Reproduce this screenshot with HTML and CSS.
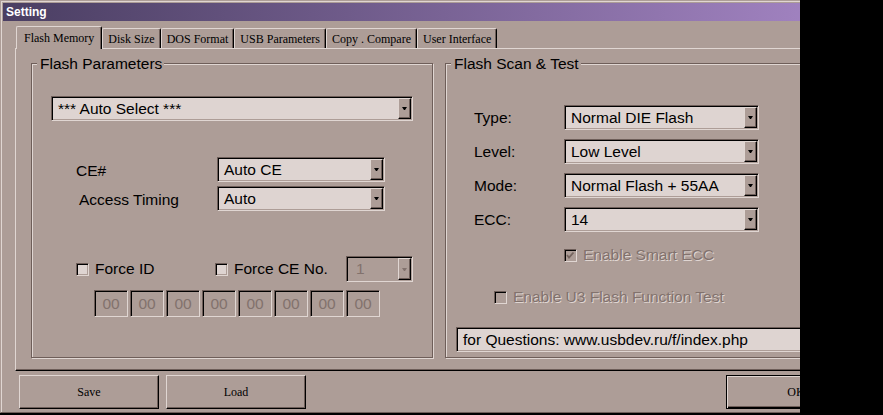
FILE: index.html
```html
<!DOCTYPE html>
<html lang="en">
<head>
  <meta charset="UTF-8">
  <meta name="viewport" content="width=device-width, initial-scale=1.0">
  <title>Setting</title>
  <link rel="stylesheet" href="styles.css">
</head>
<body>
  <div class="screen">
    <div class="window">
      <div class="titlebar">Setting</div>

      <!-- Tabs -->
      <div class="tabs">
        <div class="tab active">Flash Memory</div>
        <div class="tab">Disk Size</div>
        <div class="tab">DOS Format</div>
        <div class="tab">USB Parameters</div>
        <div class="tab">Copy . Compare</div>
        <div class="tab">User Interface</div>
      </div>

      <div class="panel">
        <!-- Flash Parameters -->
        <fieldset class="group params">
          <legend>Flash Parameters</legend>
          <div class="combo flash-select">
            <span class="value">*** Auto Select ***</span>
            <span class="drop"></span>
          </div>
          <div class="row ce-row">
            <span class="label">CE#</span>
            <div class="combo short">
              <span class="value">Auto CE</span>
              <span class="drop"></span>
            </div>
          </div>
          <div class="row timing-row">
            <span class="label">Access Timing</span>
            <div class="combo short">
              <span class="value">Auto</span>
              <span class="drop"></span>
            </div>
          </div>
          <div class="force-row">
            <label class="check force-id"><span class="box"></span>Force ID</label>
            <label class="check force-ce"><span class="box"></span>Force CE No.</label>
            <div class="combo tiny disabled">
              <span class="value">1</span>
              <span class="drop"></span>
            </div>
          </div>
          <div class="id-bytes">
            <span class="hex">00</span>
            <span class="hex">00</span>
            <span class="hex">00</span>
            <span class="hex">00</span>
            <span class="hex">00</span>
            <span class="hex">00</span>
            <span class="hex">00</span>
            <span class="hex">00</span>
          </div>
        </fieldset>

        <!-- Flash Scan & Test -->
        <fieldset class="group scan">
          <legend>Flash Scan &amp; Test</legend>
          <div class="scan-row">
            <span class="label">Type:</span>
            <div class="combo">
              <span class="value">Normal DIE Flash</span>
              <span class="drop"></span>
            </div>
          </div>
          <div class="scan-row">
            <span class="label">Level:</span>
            <div class="combo">
              <span class="value">Low Level</span>
              <span class="drop"></span>
            </div>
          </div>
          <div class="scan-row">
            <span class="label">Mode:</span>
            <div class="combo">
              <span class="value">Normal Flash + 55AA</span>
              <span class="drop"></span>
            </div>
          </div>
          <div class="scan-row">
            <span class="label">ECC:</span>
            <div class="combo">
              <span class="value">14</span>
              <span class="drop"></span>
            </div>
          </div>
          <label class="check disabled smart-ecc">
            <span class="box">
              <svg width="11" height="11" viewBox="0 0 11 11"><polyline points="2,5 4,7.5 8.5,2.5" fill="none" stroke="#75655f" stroke-width="1.8"/></svg>
            </span>Enable Smart ECC
          </label>
          <label class="check disabled u3"><span class="box"></span>Enable U3 Flash Function Test</label>
          <div class="edit questions">for Questions: www.usbdev.ru/f/index.php</div>
        </fieldset>
      </div>

      <!-- Dialog buttons -->
      <div class="buttons">
        <div class="button">Save</div>
        <div class="button">Load</div>
        <div class="button ok">OK</div>
      </div>
    </div>
  </div>
</body>
</html>
```

FILE: styles.css
```css
body {
  margin: 0;
  background-color: #000000;
  font-family: "Liberation Sans", Arial, sans-serif;
  font-size: 15.5px;
  color: #000000;
}

.screen {
  width: 800px;
  height: 415px;
  overflow: hidden;
}

/* Window frame */
.window {
  width: 885px;
  box-sizing: border-box;
  padding: 2px 2px 3px 2px;
  border: 1px solid #ad9d97;
  border-bottom-color: #6e5e59;
  background-color: #ad9d97;
  box-shadow: inset 1px 1px 0 #e0d6d2;
}
.titlebar {
  height: 18px;
  line-height: 18px;
  padding-left: 3px;
  background: linear-gradient(to right, #4a3e62, #a888c8);
  color: #ffffff;
  font-size: 12px;
  font-weight: bold;
}

/* Tabs */
.tabs {
  display: flex;
  align-items: flex-end;
  height: 22px;
  margin: 5px 0 0 13px;
  font-family: "Liberation Serif", "Times New Roman", serif;
  font-size: 12px;
}
.tab {
  height: 20px;
  box-sizing: border-box;
  padding: 3px 5px 0;
  line-height: 14px;
  border: 1px solid #e0d6d2;
  border-right-color: #000000;
  border-bottom: none;
  border-radius: 2px 2px 0 0;
  box-shadow: inset -1px 0 0 #6e5e59;
  white-space: nowrap;
}
.tab.active {
  position: relative;
  z-index: 1;
  height: 23px;
  margin-bottom: -1px;
  padding: 4px 7px 0;
  background-color: #ad9d97;
}

.panel {
  display: flex;
  height: 323px;
  box-sizing: border-box;
  margin-left: 12px;
  padding: 6px 0 12px 15px;
  border-top: 1px solid #e0d6d2;
  border-left: 1px solid #e0d6d2;
  border-bottom: 1px solid #000000;
  box-shadow: inset 0 -1px 0 #6e5e59;
}

/* Group boxes */
.group {
  margin: 0;
  padding: 0;
  min-width: 0;
  border: 1px solid #6e5e59;
  box-shadow: inset 1px 1px 0 #e0d6d2, 1px 1px 0 #e0d6d2;
}
.group legend {
  margin-left: 5px;
  padding: 0 2px 0 3px;
  line-height: 17px;
  background-color: #ad9d97;
}
.params {
  width: 402px;
  box-sizing: border-box;
}
.scan {
  width: 390px;
  box-sizing: border-box;
  margin-left: 12px;
}

/* Combo boxes */
.combo {
  display: flex;
  height: 25px;
  box-sizing: border-box;
  padding: 1px;
  border: 1px solid;
  border-color: #6e5e59 #e0d6d2 #e0d6d2 #6e5e59;
  box-shadow: inset 1px 1px 0 #000000, inset -1px -1px 0 #ad9d97;
  background-color: #ded4d1;
}
.combo .value {
  flex: 1;
  padding-left: 5px;
  line-height: 21px;
  white-space: nowrap;
  overflow: hidden;
}
.drop {
  display: flex;
  align-items: center;
  justify-content: center;
  width: 13px;
  box-sizing: border-box;
  border: 1px solid;
  border-color: #e0d6d2 #000000 #000000 #e0d6d2;
  box-shadow: inset -1px -1px 0 #6e5e59;
  background-color: #ad9d97;
}
.drop::after {
  content: '';
  width: 1px;
  border-left: 2px solid transparent;
  border-right: 2px solid transparent;
  border-top: 3px solid #000000;
}
.combo.disabled {
  background-color: #ad9d97;
}
.combo.disabled .value {
  color: #82726d;
  padding-left: 8px;
}
.combo.disabled .drop::after {
  border-top-color: #82726d;
}

/* Flash Parameters content */
.flash-select {
  width: 362px;
  margin: 24px 0 0 19px;
}
.row {
  display: flex;
  margin-top: 4px;
}
.row .label {
  width: 185px;
  box-sizing: border-box;
  height: 25px;
  line-height: 28px;
}
.ce-row {
  margin-top: 36px;
}
.ce-row .label {
  padding-left: 44px;
}
.timing-row .label {
  padding-left: 47px;
}
.combo.short {
  width: 168px;
}
.force-row {
  display: flex;
  align-items: center;
  height: 26px;
  margin: 45px 0 0 44px;
}
.force-id {
  width: 139px;
}
.force-ce {
  width: 131px;
}
.combo.tiny {
  width: 67px;
  height: 26px;
}
.id-bytes {
  display: flex;
  gap: 2px;
  margin: 8px 0 0 62px;
}
.hex {
  width: 34px;
  height: 27px;
  box-sizing: border-box;
  border: 1px solid;
  border-color: #6e5e59 #e0d6d2 #e0d6d2 #6e5e59;
  box-shadow: inset 1px 1px 0 #000000, inset -1px -1px 0 #ad9d97;
  color: #82726d;
  text-align: center;
  line-height: 25px;
}

/* Checkboxes */
.check {
  display: flex;
  align-items: center;
  gap: 6px;
  line-height: 18px;
  white-space: nowrap;
}
.box {
  width: 13px;
  height: 13px;
  box-sizing: border-box;
  border: 1px solid;
  border-color: #6e5e59 #e0d6d2 #e0d6d2 #6e5e59;
  box-shadow: inset 1px 1px 0 #000000, inset -1px -1px 0 #ad9d97;
  background-color: #ded4d1;
}
.box svg {
  display: block;
}
.check.disabled {
  color: #82726d;
  text-shadow: 1px 1px 0 #e0d6d2;
}
.check.disabled .box {
  background-color: #ad9d97;
}

/* Flash Scan & Test content */
.scan-row {
  display: flex;
  margin-top: 9px;
}
.scan-row:first-of-type {
  margin-top: 33px;
}
.scan-row .label {
  width: 90px;
  padding-left: 28px;
  line-height: 25px;
}
.scan-row .combo {
  width: 195px;
}
.smart-ecc {
  margin: 14px 0 0 118px;
}
.u3 {
  margin: 24px 0 0 48px;
}
.edit {
  height: 25px;
  box-sizing: border-box;
  padding: 0 6px;
  border: 1px solid;
  border-color: #6e5e59 #e0d6d2 #e0d6d2 #6e5e59;
  box-shadow: inset 1px 1px 0 #000000, inset -1px -1px 0 #ad9d97;
  background-color: #ded4d1;
  line-height: 23px;
  white-space: nowrap;
}
.questions {
  width: 370px;
  margin: 21px 0 0 10px;
}

/* Dialog buttons */
.buttons {
  display: flex;
  gap: 7px;
  margin: 4px 16px 0 16px;
}
.button {
  display: flex;
  align-items: center;
  justify-content: center;
  width: 140px;
  height: 34px;
  box-sizing: border-box;
  border: 1px solid;
  border-color: #e0d6d2 #000000 #000000 #e0d6d2;
  box-shadow: inset -1px -1px 0 #6e5e59;
  font-family: "Liberation Serif", "Times New Roman", serif;
  font-size: 12px;
}
.button.ok {
  margin-left: auto;
  border-color: #000000;
  box-shadow: inset 1px 1px 0 #e0d6d2, inset -1px -1px 0 #000000, inset -2px -2px 0 #6e5e59;
}
```
